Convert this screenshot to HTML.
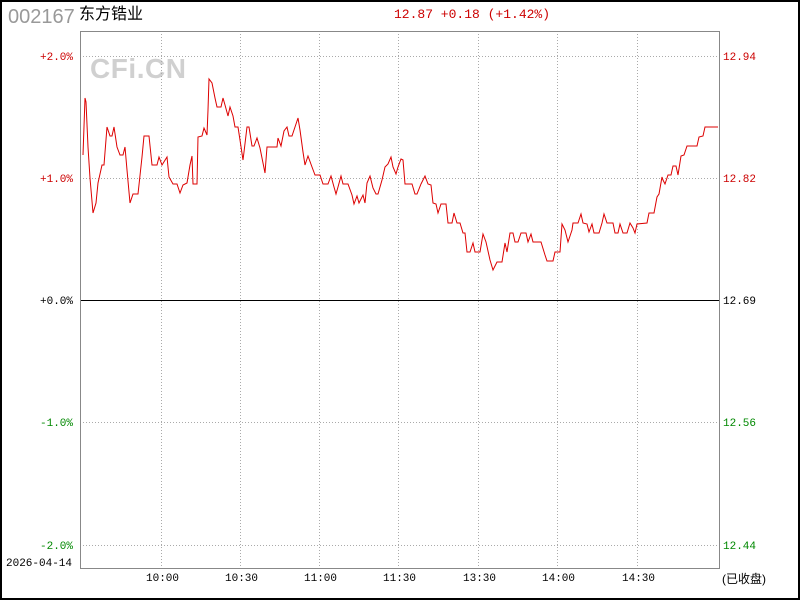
<!DOCTYPE html>
<html><head><meta charset="utf-8"><style>
html,body{margin:0;padding:0;background:#fff}
body{width:800px;height:600px;position:relative;overflow:hidden;font-family:"Liberation Mono","Noto Sans CJK SC",monospace}
.t{position:absolute;white-space:nowrap;font-size:11px;line-height:12px}
</style></head><body>
<div style="position:absolute;left:0;top:0;width:796px;height:596px;border:2px solid #000"></div>
<div class="t" style="left:8px;top:6px;font-family:'Liberation Sans',sans-serif;font-size:20px;line-height:22px;color:#999">002167</div>
<div class="t" style="left:79px;top:5px;font-family:'Liberation Sans','Noto Sans CJK SC',sans-serif;font-size:16px;line-height:20px;color:#000">东方锆业</div>
<div class="t" style="left:394px;top:8px;font-size:13px;line-height:14px;color:#c00">12.87 +0.18 (+1.42%)</div>
<svg style="position:absolute;left:0;top:0" width="800" height="600">
<text x="90" y="78" font-family="Liberation Sans" font-weight="bold" font-size="28" textLength="96" fill="#d0d0d0">CFi.CN</text>
<g stroke="#aaa" stroke-dasharray="1,2" stroke-width="1">
<line x1="80" y1="56.5" x2="720" y2="56.5"/><line x1="80" y1="178.5" x2="720" y2="178.5"/>
<line x1="80" y1="422.5" x2="720" y2="422.5"/><line x1="80" y1="545.5" x2="720" y2="545.5"/>
<line x1="161.5" y1="31" x2="161.5" y2="569"/><line x1="240.5" y1="31" x2="240.5" y2="569"/>
<line x1="319.5" y1="31" x2="319.5" y2="569"/><line x1="398.5" y1="31" x2="398.5" y2="569"/>
<line x1="478.5" y1="31" x2="478.5" y2="569"/><line x1="557.5" y1="31" x2="557.5" y2="569"/>
<line x1="637.5" y1="31" x2="637.5" y2="569"/>
</g>
<line x1="80" y1="300.5" x2="720" y2="300.5" stroke="#000"/>
<rect x="80.5" y="31.5" width="639" height="537" fill="none" stroke="#888"/>
<polyline fill="none" stroke="#d00" stroke-width="1" points="83,155 85,98 86,102 88,147 90,178 93,213 96,203 98,183 102,165 104,165 107,127 110,136 112,136 114,127 117,147 120,155 123,155 125,147 127,170 130,203 133,194 138,194 142,157 144,136 149,136 152,165 157,165 159,157 162,165 167,157 169,177 173,184 177,184 180,193 183,185 187,183 190,165 192,156 193,184 197,184 198,137 202,136 204,128 207,135 208,110 209,79 212,83 215,98 217,107 221,107 223,98 225,105 228,116 230,107 233,116 235,127 238,127 240,140 243,160 244,152 247,127 249,127 252,146 254,146 257,138 260,148 263,163 265,173 267,147 277,147 278,138 281,146 284,131 287,127 289,136 292,136 295,127 298,118 300,130 303,152 305,165 308,156 312,167 315,175 320,175 323,184 328,184 331,176 334,187 336,194 338,187 341,176 343,184 348,184 352,195 354,204 357,196 359,203 363,195 365,203 367,183 370,176 373,188 376,194 378,194 382,180 385,167 388,164 391,157 393,167 396,174 398,167 401,159 403,160 405,184 412,184 415,194 417,194 421,184 425,176 428,184 431,185 433,203 436,204 438,213 441,204 446,204 448,223 452,223 454,213 457,223 460,223 463,233 465,233 467,252 470,252 473,243 475,252 480,252 483,234 486,242 490,260 493,270 497,262 502,262 505,243 507,252 510,233 513,233 515,242 518,242 521,233 526,233 528,242 531,234 533,242 541,242 545,255 547,261 553,261 555,252 560,252 561,238 562,224 565,230 568,242 572,230 573,223 578,223 581,214 583,223 587,224 589,232 592,224 594,233 599,233 602,223 604,214 607,223 613,223 615,233 618,233 620,224 623,233 627,233 630,223 633,228 635,233 637,224 647,223 649,213 654,213 657,197 659,194 662,177 663,180 665,184 668,175 671,175 673,166 676,166 678,175 681,156 684,155 687,146 697,146 699,137 703,136 705,127 718,127"/>
</svg>
<div class="t" style="left:40px;top:52px;color:#c00">+2.0%</div>
<div class="t" style="left:40px;top:174px;color:#c00">+1.0%</div>
<div class="t" style="left:40px;top:296px;color:#000">+0.0%</div>
<div class="t" style="left:40px;top:418px;color:#080">-1.0%</div>
<div class="t" style="left:40px;top:541px;color:#080">-2.0%</div>
<div class="t" style="left:723px;top:52px;color:#c00">12.94</div>
<div class="t" style="left:723px;top:174px;color:#c00">12.82</div>
<div class="t" style="left:723px;top:296px;color:#000">12.69</div>
<div class="t" style="left:723px;top:418px;color:#080">12.56</div>
<div class="t" style="left:723px;top:541px;color:#080">12.44</div>
<div class="t" style="left:6px;top:558px;color:#000">2026-04-14</div>
<div class="t" style="left:146px;top:573px">10:00</div>
<div class="t" style="left:225px;top:573px">10:30</div>
<div class="t" style="left:304px;top:573px">11:00</div>
<div class="t" style="left:383px;top:573px">11:30</div>
<div class="t" style="left:463px;top:573px">13:30</div>
<div class="t" style="left:542px;top:573px">14:00</div>
<div class="t" style="left:622px;top:573px">14:30</div>
<div class="t" style="left:722px;top:572px;font-family:'Liberation Sans','Noto Sans CJK SC',sans-serif;font-size:12px;line-height:14px">(已收盘)</div>
</body></html>
